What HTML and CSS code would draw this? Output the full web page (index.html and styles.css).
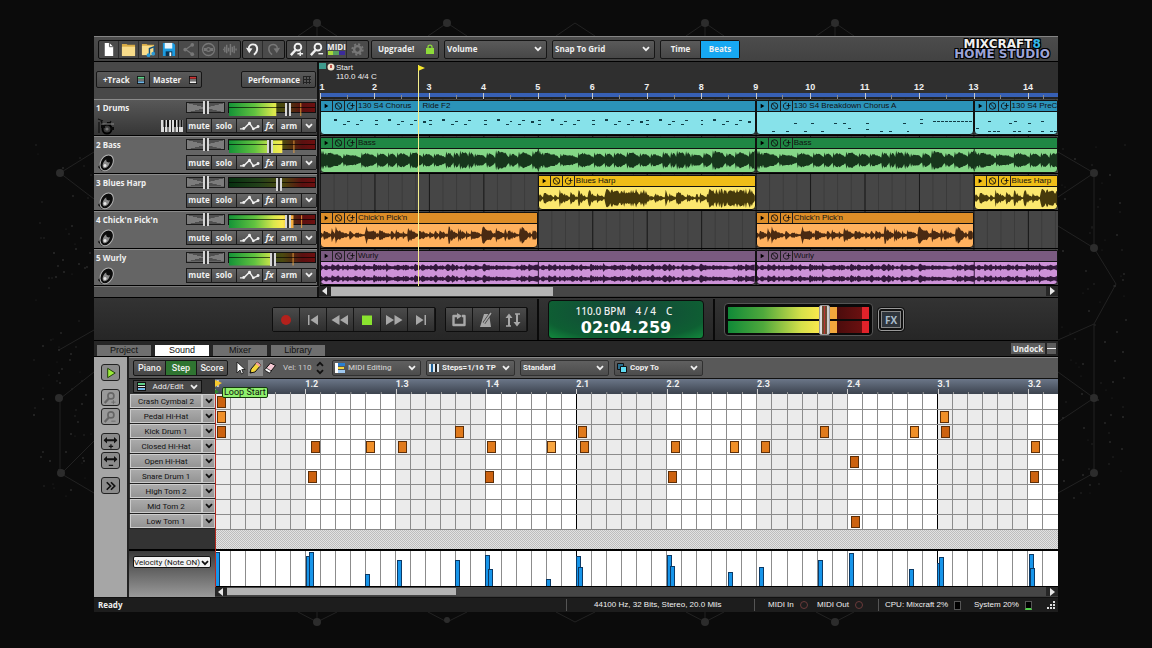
FILE: index.html
```
<!DOCTYPE html>
<html lang="en">
  <head>
    <meta charset="UTF-8" />
    <meta name="viewport" content="width=device-width, initial-scale=1.0" />
    <title>Mixcraft 8 Home Studio</title>
    <link rel="stylesheet" href="styles.css">
  </head>
  <body>
    <svg class="defs" width="0" height="0" aria-hidden="true">
      <symbol id="chevron" viewBox="0 0 8 6"><path d="M1 1.2l3 3 3-3" fill="none" stroke="currentColor" stroke-width="1.8"/></symbol>
      <symbol id="tri-left" viewBox="0 0 8 8"><path d="M6 0v8L1 4z" fill="currentColor"/></symbol>
      <symbol id="tri-right" viewBox="0 0 8 8"><path d="M2 0v8l5-4z" fill="currentColor"/></symbol>
      <symbol id="list" viewBox="0 0 9 9"><path d="M0 0h9v9H0z" fill="#111"/><path d="M1 1h7v2H1z" fill="var(--a, #5fd08a)"/><path d="M1 4h7v1H1z" fill="#eee"/><path d="M1 6h7v2H1z" fill="var(--b, #6fb7e8)"/></symbol>
      <symbol id="no" viewBox="0 0 10 10"><circle cx="5" cy="5" r="3.6" fill="none" stroke="currentColor"/><path d="M2.5 2.5l5 5" stroke="currentColor"/></symbol>
      <symbol id="loop" viewBox="0 0 10 10"><path d="M5 1.5a3.5 3.5 0 1 0 3 5.3M5 4.5h4.6M7.2 1.8v5" fill="none" stroke="currentColor"/></symbol>
      <symbol id="speaker" viewBox="0 0 18 18"><path d="M1 13l4 4 4-1-5-7z" fill="#0c0c0c"/><ellipse cx="9.500" cy="8.500" rx="6" ry="8.400" transform="rotate(30 9 9)" fill="#0c0c0c" stroke="#b5b5b5" stroke-width="1"/><ellipse cx="9.500" cy="9.500" rx="3" ry="5" transform="rotate(30 9 9)" fill="#8a8a8a"/><circle cx="11.500" cy="6" r="2.400" fill="#0c0c0c"/><circle cx="8" cy="11.500" r="1.500" fill="#e8e8e8"/></symbol>
      <symbol id="kit" viewBox="0 0 18 18"><path d="M1 2l5 2M2 5v11M4 4l2 4M14 4l-2 3" stroke="#111" stroke-width="1.300"/><circle cx="10" cy="12" r="4.500" fill="#3a3a3a" stroke="#000" stroke-width="2"/><circle cx="10" cy="12" r="1.600" fill="#777"/><path d="M4 8h4v3H4zM10 5h4v3h-4zM14 10h3v3h-3z" fill="#0a0a0a"/><path d="M5 7h12" stroke="#888"/></symbol>
      <symbol id="curve" viewBox="0 0 22 10"><path d="M1 8h4l6-6 4 6 5-2" fill="none" stroke="currentColor" stroke-width="1.500"/><circle cx="5" cy="7.500" r="1.500" fill="currentColor"/><circle cx="11" cy="2" r="1.500" fill="currentColor"/><circle cx="15" cy="8" r="1.500" fill="currentColor"/><circle cx="20" cy="5.500" r="1.500" fill="currentColor"/></symbol>
      <symbol id="keys" viewBox="0 0 22 12"><path d="M0 0h22v12H0z" fill="#ddd"/><path d="M3.500 0v12M7 0v12M10.500 0v12M14 0v12M17.500 0v12" stroke="#222"/><path d="M3.500 0v7M7 0v7M14 0v7M17.500 0v7M20.500 0v7" stroke="#111" stroke-width="2"/></symbol>
      <symbol id="magnifier" viewBox="0 0 16 16"><circle cx="9.500" cy="5.500" r="3.600" fill="none" stroke="currentColor" stroke-width="2"/><path d="M7 8.500L2 14" stroke="currentColor" stroke-width="2.600"/></symbol>
      <symbol id="arrows" viewBox="0 0 16 8"><path d="M0 4l4-3.600v2.400h8V.4L16 4l-4 3.600V5.200H4v2.400z" fill="currentColor"/></symbol>
    </svg>

    <svg class="backdrop" viewBox="0 0 1152 648" preserveAspectRatio="xMidYMid slice" aria-hidden="true">
      <g fill="none" stroke="#222">
        <path d="M298 36l19-13 20 13M317 23v13M428 36l19-13 20 13M556 36l19-13 20 13M686 36l19-13 19 13M705 23v13M816 36l19-13 19 13M835 23v13"/>
        <path d="M298 612l19 10 20-10M428 612l19 10 20-10M556 612l19 10 20-10M686 612l19 10 19-10M816 612l19 10 19-10M317 612v10M705 612v10"/>
        <path d="M94 152l-34 21M60 173l34 26M94 330l-35 20M61 398l33-26M60 398v75l34 20M62 473l32-32"/>
        <path d="M1058 152l36 21v75M1094 173l-36 24M1094 248l22 36-22 40v74M1094 398v75M1058 372l36 26-36 24M1094 473l-36 20M1058 340l36-16M1094 248l-36-22"/>
      </g>
      <g fill="#2c2c2c">
        <circle cx="317" cy="23" r="4"/><circle cx="447" cy="23" r="4"/><circle cx="705" cy="23" r="4"/><circle cx="835" cy="23" r="4"/>
        <circle cx="317" cy="622" r="4"/><circle cx="447" cy="620" r="3"/><circle cx="705" cy="622" r="4"/><circle cx="835" cy="622" r="4"/>
        <circle cx="60" cy="173" r="4"/><circle cx="59" cy="398" r="4"/><circle cx="61" cy="473" r="4"/>
        <circle cx="1094" cy="173" r="4"/><circle cx="1094" cy="248" r="4"/><circle cx="1094" cy="398" r="4"/><circle cx="1094" cy="473" r="4"/>
      </g>
      <g id="specks" fill="#2a2a2a"></g>
    </svg>

    <main class="app">
      <header class="toolbar">
        <div class="icon-group">
          <button aria-label="New"><svg viewBox="0 0 16 16"><path d="M4 1h5l4 4v10H4z" fill="#fff"/><path d="M9 1v4h4" fill="none" stroke="#555"/></svg></button>
          <button aria-label="Open"><svg viewBox="0 0 16 16"><path d="M1 2h5l1 1h8v11H1z" fill="#d8ab45"/><path d="M1 5h14v10H1z" fill="#f8dc8a"/></svg></button>
          <button aria-label="Add sound"><svg viewBox="0 0 16 16"><path d="M1 2h5l1 1h7v10H1z" fill="#d8ab45"/><path d="M1 4h13v10H1z" fill="#f8dc8a"/><path d="M9 14V7l5-2v7" fill="none" stroke="#124e7a" stroke-width="1.500"/><circle cx="8" cy="14" r="2" fill="#2a9bd8"/><circle cx="13" cy="12.500" r="2" fill="#2a9bd8"/></svg></button>
          <button aria-label="Save"><svg viewBox="0 0 16 16"><path d="M2 1h11l2 2v12H2z" fill="#1c9be0"/><path d="M4 1h8v6H4z" fill="#e8f4fb"/><path d="M5 10h7v5H5z" fill="#0b3350"/><path d="M9 11h2v4H9z" fill="#fff"/></svg></button>
          <button aria-label="Share" disabled><svg viewBox="0 0 16 16"><path d="M12 3L5 8l7 5" fill="none" stroke="currentColor" stroke-width="1.300"/><circle cx="12" cy="3" r="2" fill="currentColor"/><circle cx="4.500" cy="8" r="2" fill="currentColor"/><circle cx="12" cy="13" r="2" fill="currentColor"/></svg></button>
          <button aria-label="Burn disc" disabled><svg viewBox="0 0 16 16"><circle cx="8" cy="8" r="6.400" fill="none" stroke="currentColor" stroke-width="1.400"/><circle cx="8" cy="8" r="2" fill="none" stroke="currentColor" stroke-width="1.400"/><path d="M3 8h3M10 8h3" stroke="currentColor" stroke-width="3"/></svg></button>
          <button aria-label="Mix down" disabled><svg viewBox="0 0 16 16"><path d="M1 8h1M3 5v6M5 3v9M7 6v4M9 2v12M11 5v6M13 4v8M15 7v2" stroke="currentColor" stroke-width="1.500"/></svg></button>
        </div>
        <div class="icon-group">
          <button aria-label="Undo"><svg viewBox="0 0 16 16"><path d="M4 7C4 1 13 1 13 7.500c0 3-1.500 4.500-3.500 6" fill="none" stroke="currentColor" stroke-width="2"/><path d="M1 6l3.500 6L8 7z" fill="currentColor"/></svg></button>
          <button aria-label="Redo" disabled><svg viewBox="0 0 16 16"><path d="M12 7C12 1 3 1 3 7.500c0 3 1.500 4.500 3.500 6" fill="none" stroke="currentColor" stroke-width="1.600"/><path d="M15 6l-3.500 6L8 7z" fill="currentColor"/></svg></button>
        </div>
        <div class="icon-group">
          <button aria-label="Zoom in"><svg viewBox="0 0 16 16"><use href="#magnifier"/><path d="M9 12.500h6M12 10v5" stroke="currentColor" stroke-width="1.500"/></svg></button>
          <button aria-label="Zoom out"><svg viewBox="0 0 16 16"><use href="#magnifier"/><path d="M10 12.500h5" stroke="currentColor" stroke-width="1.500"/></svg></button>
          <button class="midi" aria-label="MIDI"><span>MIDI</span><i></i></button>
          <button aria-label="Preferences" disabled><svg viewBox="0 0 16 16"><circle cx="8" cy="8" r="3.600" fill="none" stroke="currentColor" stroke-width="2.600"/><circle cx="8" cy="8" r="5.600" fill="none" stroke="currentColor" stroke-width="2" stroke-dasharray="2.200 2.200"/></svg></button>
        </div>
        <button class="btn upgrade">Upgrade!
          <svg width="8" height="10" viewBox="0 0 8 10"><path d="M2 5V3c0-2.500 4-2.500 4 0v2" fill="none" stroke="#8edb3a" stroke-width="1.300"/><path d="M0 4h8v6H0z" fill="#8edb3a"/></svg>
        </button>
        <label class="select wide"><select aria-label="Automation"><option>Volume</option></select><svg><use href="#chevron"/></svg></label>
        <label class="select wide"><select aria-label="Snap"><option>Snap To Grid</option></select><svg><use href="#chevron"/></svg></label>
        <div class="toggle">
          <button>Time</button><button class="on">Beats</button>
        </div>
        <div class="logo"><b>MIXCRAFT<em>8</em></b><strong>HOME STUDIO</strong></div>
      </header>

      <section class="arrange">
        <div class="track-head">
          <div class="pair">
            <button>+Track <svg width="8" height="8"><use href="#list"/></svg></button><button>Master <svg class="red" width="8" height="8"><use href="#list"/></svg></button>
          </div>
          <button class="btn perf">Performance <i></i></button>
        </div>
        <div class="ruler" id="ruler">
          <p class="start"><svg width="16" height="8" viewBox="0 0 16 8"><path d="M0 0h7v6H0z" fill="#3f9a8c"/><circle cx="12" cy="4" r="3.500" fill="#f2e4cf"/><path d="M12 2v3" stroke="#a22" stroke-width="1.500"/></svg>Start</p>
          <p class="tempo">110.0 4/4 C</p>
          <div class="bars" id="bars"></div>
        </div>
        <div class="tracks" id="tracks"></div>
        <div class="lanes" id="lanes"></div>
        <div class="track-foot"></div>
        <div class="scrollbar arrange-scroll">
          <button aria-label="Scroll left"><svg width="8" height="8"><use href="#tri-left"/></svg></button>
          <div><i></i></div>
          <button aria-label="Scroll right"><svg width="8" height="8"><use href="#tri-right"/></svg></button>
        </div>
        <div class="playhead"></div>
      </section>

      <section class="transport">
        <div class="keys">
          <button aria-label="Record"><svg viewBox="0 0 20 16"><circle cx="10" cy="8" r="5" fill="#b3211c"/></svg></button>
          <button aria-label="To start"><svg viewBox="0 0 20 16"><path d="M5 3h1.500v10H5zM15 3v10L7.500 8z" fill="currentColor"/></svg></button>
          <button aria-label="Rewind"><svg viewBox="0 0 20 16"><path d="M9.500 3v10L1.500 8zM18 3v10l-8-5z" fill="currentColor"/></svg></button>
          <button aria-label="Stop"><svg viewBox="0 0 20 16"><path d="M5 3.500h10v9.500H5z" fill="#8ae32f"/></svg></button>
          <button aria-label="Fast forward"><svg viewBox="0 0 20 16"><path d="M2 3v10l8-5zM10.500 3v10l8-5z" fill="currentColor"/></svg></button>
          <button aria-label="To end"><svg viewBox="0 0 20 16"><path d="M5 3v10l7.500-5zM13.500 3H15v10h-1.500z" fill="currentColor"/></svg></button>
        </div>
        <div class="keys">
          <button aria-label="Loop"><svg viewBox="0 0 20 16"><path d="M8 4H4.500v9h11V4H13" fill="none" stroke="currentColor" stroke-width="2.400" stroke-linejoin="round"/><path d="M8 1l5 3-5 3.200z" fill="currentColor"/></svg></button>
          <button aria-label="Metronome"><svg viewBox="0 0 20 16"><path d="M4 15L8 2h5l2 13z" fill="currentColor"/><path d="M8 11l7-10" stroke="#333" stroke-width="3"/><path d="M8 11l7-10" stroke="currentColor" stroke-width="1.600"/></svg></button>
          <button aria-label="Punch"><svg viewBox="0 0 20 16"><path d="M6 14V4M14 2v9" stroke="currentColor" stroke-width="2"/><path d="M2.500 6L6 1.500 9.500 6zM10.500 10l3.500 4.500 3.500-4.500z" fill="currentColor"/><path d="M3 14h5M12 2h5" fill="none" stroke="currentColor" stroke-width="1.500"/></svg></button>
        </div>
        <hr>
        <div class="lcd">
          <p><span>110.0 BPM</span><span>4 / 4</span><span>C</span></p>
          <output>02:04.259</output>
        </div>
        <hr>
        <div class="master-meter">
          <i></i><i></i>
          <input type="range" aria-label="Master volume" value="70">
        </div>
        <button class="fx">FX</button>
      </section>

      <nav class="tabs">
        <button>Project</button><button class="on">Sound</button><button>Mixer</button><button>Library</button>
        <button class="undock">Undock</button><button class="shrink" aria-label="Minimise"></button>
      </nav>

      <section class="editor">
        <aside class="side">
          <button aria-label="Play"><svg viewBox="0 0 16 14"><path d="M5 2v10l8-5z" fill="#9bea3a" stroke="#1a3a08"/></svg></button>
          <button class="gap" aria-label="Zoom in" disabled><svg viewBox="0 0 18 16"><use href="#magnifier" width="16" height="16"/><path d="M10 13h5M12.500 10.500v5" stroke="currentColor"/></svg></button>
          <button aria-label="Zoom out" disabled><svg viewBox="0 0 18 16"><use href="#magnifier" width="16" height="16"/><path d="M10 13h5" stroke="currentColor"/></svg></button>
          <button class="gap" aria-label="Taller"><svg viewBox="0 0 16 16"><use href="#arrows" y="2" width="16" height="8"/><path d="M6 13h5M8.500 10.500v5" stroke="currentColor" stroke-width="1.400"/></svg></button>
          <button aria-label="Shorter"><svg viewBox="0 0 16 16"><use href="#arrows" y="2" width="16" height="8"/><path d="M6 13h5" stroke="currentColor" stroke-width="1.400"/></svg></button>
          <button class="gap" aria-label="More"><svg viewBox="0 0 16 14"><path d="M4 3l4 4-4 4M8.500 3l4 4-4 4" fill="none" stroke="currentColor" stroke-width="1.800"/></svg></button>
        </aside>
        <div class="editor-bar">
          <div class="toggle green">
            <button>Piano</button><button class="on">Step</button><button>Score</button>
          </div>
          <div class="tools">
            <button aria-label="Select"><svg viewBox="0 0 14 14"><path d="M4 1v11l3-3 1.500 4 1.800-.8L8.800 8.500h3.400z" fill="#fff" stroke="#111" stroke-width=".8"/></svg></button>
            <button class="on" aria-label="Draw"><svg viewBox="0 0 14 14"><path d="M2 12l1-4 6-7 4 3-6 7z" fill="#f4d63c" stroke="#111"/><path d="M9 1l4 3-1.500 1.800-4-3z" fill="#f3a0a0"/><path d="M2 12l2-.6-1.300-1.200z" fill="#111"/></svg></button>
            <button aria-label="Erase"><svg viewBox="0 0 14 14"><path d="M1.500 9l6-7 5 2.500-6 7.500z" fill="#f6c9d4" stroke="#111"/><path d="M1.500 9l5 3 1.700-2-5-3z" fill="#fff" stroke="#111" stroke-width=".7"/></svg></button>
          </div>
          <label class="vel">Vel: <input type="text" value="110"></label>
          <div class="stepper"><button aria-label="Up"><svg class="flip" width="8" height="6"><use href="#chevron"/></svg></button><button aria-label="Down"><svg width="8" height="6"><use href="#chevron"/></svg></button></div>
          <label class="select iconic dim"><svg class="lead" viewBox="0 0 10 10"><path d="M0 0h3v10H0z" fill="#fff"/><path d="M3 0h7v3H3z" fill="#2a7fd0"/><path d="M3 4h6v2H3z" fill="#f4d63c"/><path d="M3 7h7v3H3z" fill="#9fc8f0"/></svg><select aria-label="Mode"><option>MIDI Editing</option></select><svg><use href="#chevron"/></svg></label>
          <label class="select iconic"><svg class="lead" viewBox="0 0 10 10"><path d="M0 1h10v8H0z" fill="#dfe8ee"/><path d="M2 1h2v8H2z" fill="#1d5f96"/><path d="M6 1h2v8H6z" fill="#222"/></svg><select aria-label="Steps"><option>Steps=1/16 TP</option></select><svg><use href="#chevron"/></svg></label>
          <label class="select"><select aria-label="Style"><option>Standard</option></select><svg><use href="#chevron"/></svg></label>
          <label class="select iconic"><svg class="lead" viewBox="0 0 10 10"><path d="M.5.500h6v6h-6z" fill="#2a6f90" stroke="#111"/><path d="M3.500 3.500h6v6h-6z" fill="#5fdcf2" stroke="#111"/></svg><select aria-label="Copy"><option>Copy To</option></select><svg><use href="#chevron"/></svg></label>
        </div>
        <div class="names" id="names">
          <div class="add"><button class="addedit"><svg width="9" height="9"><use href="#list"/></svg><span>Add/Edit</span><svg width="8" height="6"><use href="#chevron"/></svg></button></div>
        </div>
        <div class="steps">
          <div class="beats" id="beats"></div>
          <svg class="grid" id="grid"></svg>
          <div class="hatch"></div>
          <svg class="velocity" id="velocity"></svg>
          <div class="scrollbar">
            <button aria-label="Scroll left"><svg width="8" height="8"><use href="#tri-left"/></svg></button>
            <div><i></i></div>
            <button aria-label="Scroll right"><svg width="8" height="8"><use href="#tri-right"/></svg></button>
          </div>
          <span class="loop-start">Loop Start</span>
          <svg class="loop-flag" width="8" height="16" viewBox="0 0 8 16"><path d="M0 1l7 3-7 4z" fill="#f7c92c"/><path d="M0 10l4 3-4 2z" fill="#2f8a2a"/></svg>
        </div>
      </section>

      <footer class="status">
        <span class="ready">Ready</span>
        <span class="audio">44100 Hz, 32 Bits, Stereo, 20.0 Mils</span>
        <span class="midi-io">MIDI In <i></i></span><span class="midi-out">MIDI Out <i></i></span>
        <span class="cpu">CPU: Mixcraft 2% <i></i></span><span class="sys">System 20% <i></i></span>
        <svg width="8" height="8" viewBox="0 0 8 8"><path d="M6 0h2v2H6zM3 3h2v2H3zM6 3h2v2H6zM0 6h2v2H0zM3 6h2v2H3zM6 6h2v2H6z" fill="#ddd"/></svg>
      </footer>
    </main>
    <script src="script.js"></script>
  </body>
</html>
```
FILE: styles.css
```
* {
  box-sizing: border-box;
}

body {
  margin: 0;
  padding: 36px 94px;
  min-height: 100vh;
  background: #0b0b0b;
  color: #f0f0f0;
  font-family: "Open Sans", "Noto Sans", sans-serif;
  font-size: 8px;
  line-height: 12px;
}

p {
  margin: 0;
}

button,
input,
select {
  margin: 0;
  padding: 0;
  border: 0;
  background: none;
  color: inherit;
  font: inherit;
}

.defs {
  display: none;
}

.backdrop {
  position: absolute;
  inset: 0;
  width: 100%;
  height: 100%;
  z-index: -1;
}

.app {
  background: #222;
  font-weight: 700;
}

/* top toolbar */
.toolbar {
  display: flex;
  align-items: center;
  gap: 5px;
  height: 26px;
  padding: 0 8px 0 4px;
  border-top: 1px solid #858585;
  border-bottom: 1px solid #000;
  background: linear-gradient(#4c4c4c, #424242);
}

.icon-group {
  display: flex;
  height: 19px;
  margin-right: -4px;
  border: 1px solid #111;
  border-radius: 2px;
  background: #4a4a4a;
}

.icon-group button {
  width: 20px;
  border-right: 1px solid #2c2c2c;
  display: flex;
  align-items: center;
  justify-content: center;
}

.icon-group button:last-child {
  width: 21px;
  border-right: 0;
}

.icon-group svg {
  width: 15px;
  height: 15px;
}

.icon-group button:disabled {
  color: #777;
}

.icon-group .midi {
  flex-direction: column;
  line-height: 8px;
}

.midi i {
  width: 17px;
  height: 4px;
  background: linear-gradient(90deg, #a6d83a 30%, #57a05f 30% 65%, #3b2b9a 65%);
}

.btn,
.pair,
.toggle,
.select {
  border: 1px solid #161616;
  border-radius: 2px;
  background: linear-gradient(#5a5a5a, #474747);
}

.upgrade {
  display: flex;
  align-items: center;
  justify-content: space-between;
  width: 68px;
  height: 19px;
  margin-left: 1px;
  padding: 0 4px 0 6px;
}

.select {
  display: grid;
  grid-template-columns: 1fr 8px;
  align-items: center;
  height: 16px;
  padding: 0 4px 0 2px;
}

.select select {
  grid-area: 1 / 1 / 2 / 3;
  appearance: none;
  width: 100%;
  outline: 0;
}

.select svg {
  grid-area: 1 / 2;
  width: 8px;
  height: 6px;
  pointer-events: none;
}

.select.wide {
  width: 103px;
  height: 19px;
}

.toggle {
  display: flex;
}

.toggle button + button {
  border-left: 1px solid #161616;
}

.toolbar .toggle button {
  width: 39px;
  height: 17px;
}

.toolbar .toggle .on {
  background: #17a8f2;
}

.logo {
  margin-left: auto;
  font-family: "DejaVu Sans", sans-serif;
  font-size: 12px;
  line-height: 10px;
  text-align: center;
  text-shadow: 1px 1px #000, -1px -1px #000, 1px -1px #000, -1px 1px #000;
}

.logo b,
.logo strong {
  display: block;
}

.logo em {
  color: #35b8e8;
  font-style: normal;
}

.logo strong {
  color: #9ca3d6;
}

/* arrangement */
.arrange {
  position: relative;
  display: grid;
  grid-template-columns: 225px 1fr;
  grid-template-rows: 37px 187px 11px;
  border-bottom: 1px solid #000;
}

.track-head {
  display: flex;
  align-items: center;
  justify-content: space-between;
  padding: 0 1px 2px 2px;
  border-right: 2px solid #111;
  background: #484848;
}

.track-head button {
  display: flex;
  align-items: center;
  justify-content: space-between;
  height: 15px;
  padding: 0 4px 0 6px;
}

.pair {
  display: flex;
}

.pair button {
  width: 52px;
}

.pair button + button {
  border-left: 1px solid #161616;
  padding-left: 3px;
}

.red {
  --a: #c33;
  --b: #eee;
}

.track-head .perf {
  width: 75px;
  height: 17px;
}

.perf i {
  width: 8px;
  height: 8px;
  background: repeating-linear-gradient(90deg, #222 0 1px, transparent 1px 3px), repeating-linear-gradient(#222 0 1px, #555 1px 3px);
}

.ruler {
  position: relative;
  overflow: hidden;
  background: #2f2f2f;
  font-family: "Liberation Sans", sans-serif;
  line-height: 9px;
  font-weight: 400;
}

.start {
  display: flex;
  gap: 1px;
  padding-top: 1px;
}

.tempo {
  padding-left: 17px;
}

.bars {
  display: grid;
  grid-template-columns: repeat(13, 100fr) 55fr;
  height: 18px;
  margin-left: 1px;
  padding-top: 2px;
  background: linear-gradient(transparent 12px, #3760b5 12px 16px, #222 16px);
  font-size: 9px;
  font-weight: 700;
}

.bars div {
  height: 16px;
  background: linear-gradient(#c8c8c8, #c8c8c8) 0 10px / 1px 6px no-repeat, linear-gradient(#888, #888) 50% 12px / 1px 4px no-repeat;
}

.bars span {
  display: block;
  width: 14px;
  margin-left: -7px;
  text-align: center;
}

.bars div:first-child span {
  margin-left: -5px;
}

.tracks {
  display: grid;
  grid-template-rows: repeat(5, 1fr);
  border-right: 2px solid #111;
}

.track {
  display: grid;
  grid-template-columns: 1fr 39px 88px;
  grid-template-rows: 12px 16px;
  gap: 4px 3px;
  padding: 2px 1px 0 2px;
  border-top: 1px solid #8a8a8a;
  border-bottom: 1px solid #000;
  background: #656565;
  line-height: 12px;
}

.track.selected {
  background: linear-gradient(#585858, #363636);
}

.track h2 {
  margin: 0;
  font-size: 8px;
  font-weight: 700;
}

.track .who {
  display: flex;
  justify-content: space-between;
  align-items: center;
}

.pan {
  appearance: none;
  width: 39px;
  height: 11px;
  border: 1px solid #1c1c1c;
  background:
    linear-gradient(to top right, transparent 48%, #505050 50%) 0 0 / 50% 50% no-repeat,
    linear-gradient(to bottom right, transparent 48%, #505050 50%) 0 100% / 50% 50% no-repeat,
    linear-gradient(to top left, transparent 48%, #505050 50%) 100% 0 / 50% 50% no-repeat,
    linear-gradient(to bottom left, transparent 48%, #505050 50%) 100% 100% / 50% 50% no-repeat,
    #7c7c7c;
}

.pan::-webkit-slider-thumb,
.meter input::-webkit-slider-thumb {
  appearance: none;
  width: 6px;
  height: 13px;
  border: solid #d6d6d6;
  border-width: 0 2px;
  background: #333;
}

.meter {
  display: grid;
  height: 11px;
  border: 1px solid #111;
  background: linear-gradient(90deg, #06300f, #23401a 35%, #4b4a10 62%, #5b1010 85%, #6d0f0f);
}

.meter i,
.meter input,
.meter u {
  grid-area: 1 / 1;
}

.meter i {
  background: linear-gradient(90deg, #149337, #62c340 30%, #d9e84c 52%, #fcea50 62%, #f3a53c 75%);
}

.meter u {
  z-index: 1;
  background: linear-gradient(transparent 4px, rgba(0, 0, 0, 0.65) 4px 5px, transparent 5px);
}

.meter input {
  z-index: 2;
  appearance: none;
  width: 100%;
  background: none;
}

.strip {
  grid-column: 2 / 4;
  display: grid;
  grid-template-columns: 25px 25px 26px 14px 25px 15px;
  border: 1px solid #1a1a1a;
  border-right-width: 0;
  height: 15px;
}

.strip button {
  display: flex;
  align-items: center;
  justify-content: center;
  border-right: 1px solid #1a1a1a;
  background: linear-gradient(#666, #4c4c4c);
}

.strip em {
  font-size: 9px;
}

.lanes {
  display: grid;
  grid-template-rows: repeat(5, 1fr);
  padding-left: 1px;
  background: #333;
  overflow: hidden;
  color: #111;
  font-family: "Liberation Sans", sans-serif;
  font-weight: 400;
}

.lane {
  display: grid;
  grid-template-columns: repeat(3, 400fr) 155fr;
  padding-top: 1px;
  border-bottom: 1px solid #000;
  background: #464646;
  background-image: linear-gradient(90deg, #181818 1px, transparent 1px), linear-gradient(90deg, #3a3a3a 1px, transparent 1px);
  background-size: calc(100% / 13.55) 100%, calc(100% / 54.2) 100%;
  min-height: 0;
  min-width: 0;
}

.clip {
  display: flex;
  flex-direction: column;
  min-width: 0;
  min-height: 0;
  border: 1px solid #111;
  border-radius: 0 0 4px 4px;
  background: var(--body);
  overflow: hidden;
}

.clip header {
  display: flex;
  align-items: center;
  flex: none;
  height: 11px;
  border-bottom: 1px solid #111;
  background: var(--bar);
  line-height: 10px;
  white-space: nowrap;
}

.clip header svg {
  flex: none;
  width: 12px;
  height: 10px;
  padding: 0 1px;
  border-right: 1px solid #222;
}

.clip header span {
  margin-left: 1px;
}

.clip header span + span {
  margin-left: 11px;
}

.clip .wave {
  flex: 1;
  min-height: 0;
  width: 100%;
  fill: var(--ink);
}

.track-foot {
  border-top: 1px solid #777;
  border-right: 2px solid #111;
  background: #525252;
}

.scrollbar {
  display: flex;
  height: 11px;
  padding-bottom: 1px;
  background: #3c3c3c;
  color: #e6e6e6;
}

.scrollbar button {
  display: flex;
  align-items: center;
  justify-content: center;
  width: 12px;
  background: #262626;
}

.scrollbar div {
  flex: 1;
  padding: 1px 0;
  background: #464646;
}

.scrollbar i {
  display: block;
  width: 28%;
  height: 100%;
  background: #b4b4b4;
}

.arrange-scroll i {
  width: 31%;
}

.arrange-scroll div {
  padding: 1px 0 0;
}

/* song position marker, lies over ruler and lanes */
.playhead {
  position: absolute;
  top: 3px;
  bottom: 11px;
  left: calc(225px + (100% - 225px) * 0.134);
  width: 1px;
  background: #f5ee8c;
}

.playhead::before {
  content: "";
  position: absolute;
  border: solid transparent;
  border-width: 3px 0 3px 7px;
  border-left-color: #f7e82f;
}

/* transport */
.transport {
  display: flex;
  align-items: center;
  justify-content: center;
  gap: 9px;
  height: 43px;
  padding: 1px 0 0 24px;
  background: linear-gradient(#333, #262626);
  border-bottom: 1px solid #000;
}

.transport hr {
  align-self: stretch;
  width: 2px;
  margin: 0;
  border: 0;
  background: #0a0a0a;
}

.keys {
  display: flex;
  border: 1px solid #0e0e0e;
  border-radius: 2px;
}

.keys button {
  width: 27px;
  height: 23px;
  border-right: 1px solid #161616;
  background: linear-gradient(#4b4b4b, #2e2e2e);
  color: #a8a8a8;
}

.keys svg {
  display: block;
  width: 20px;
  height: 16px;
  margin: auto;
}

.lcd {
  width: 156px;
  height: 39px;
  padding: 4px 0 0;
  border: 1px solid #0c0c0c;
  border-radius: 4px;
  background: radial-gradient(ellipse at 50% 30%, #15443a, #0e5f33 75%, #128a3d);
  text-align: center;
}

.lcd p {
  display: flex;
  justify-content: center;
  gap: 10px;
  padding-right: 4px;
  font-family: "Noto Sans", sans-serif;
  font-size: 10px;
  font-weight: 500;
}

.lcd output {
  display: block;
  font-family: "DejaVu Sans", sans-serif;
  font-size: 16px;
  line-height: 21px;
  color: #fff;
}

.master-meter {
  display: grid;
  grid-template-rows: 12px 12px;
  gap: 2px;
  align-content: center;
  width: 149px;
  height: 33px;
  padding: 0 3px;
  border: 1px solid #555;
  border-radius: 4px;
  background: #0a0a0a;
}

.master-meter i {
  grid-area: 1 / 1;
  background: linear-gradient(90deg, #108a38, #4fa83c 25%, #d6e04a 52%, #fbe84c 65%, #f2a83c 70% 77%, #4a0c0c 77%, #6a1010 95%, #e0222a 95%);
}

.master-meter i + i {
  grid-row: 2;
}

.master-meter input {
  grid-area: 1 / 1 / 3 / 2;
  z-index: 1;
  appearance: none;
  width: 100%;
  background: none;
}

.master-meter input::-webkit-slider-thumb {
  appearance: none;
  width: 11px;
  height: 30px;
  border: 1px solid #999;
  border-radius: 2px;
  background: linear-gradient(90deg, #ddd 2px, #6a4a30 2px 4px, #b33 4px 5px, #6a4a30 5px 7px, #ccc 7px);
}

.fx {
  width: 26px;
  height: 23px;
  margin-left: -4px;
  border: 1px solid #999;
  border-radius: 3px;
  outline: 1px solid #111;
  background: #2e343b;
  box-shadow: inset 0 0 0 2px #111, inset 0 0 0 3px #888;
  color: #a9bccb;
  font-size: 10px;
}

/* panel tabs */
.tabs {
  display: flex;
  align-items: flex-end;
  gap: 4px;
  height: 16px;
  padding: 0 2px 0 3px;
  background: #262626;
  border-bottom: 1px solid #000;
  font-family: "Liberation Sans", sans-serif;
  font-size: 9px;
  font-weight: 400;
}

.tabs button {
  width: 54px;
  height: 11px;
  line-height: 11px;
  background: #6f6f6f;
  color: #111;
}

.tabs .on {
  background: #fff;
}

.tabs .undock {
  width: 34px;
  margin: 0 -2px 2px auto;
  background: #5c5c5c;
  color: #f0f0f0;
  font-family: "Open Sans", sans-serif;
  font-size: 8px;
  font-weight: 700;
}

.tabs .shrink {
  width: 9px;
  margin-bottom: 2px;
  background: linear-gradient(#5c5c5c 5px, #eee 5px 6px, #5c5c5c 6px);
}

/* step editor */
.editor {
  display: grid;
  grid-template-columns: 35px 86px 1fr;
  grid-template-rows: 22px auto;
}

.side {
  grid-row: 1 / 3;
  display: flex;
  flex-direction: column;
  align-items: center;
  gap: 2px;
  padding-top: 7px;
  border-right: 2px solid #222;
  background: #a6a6a6;
  color: #111;
}

.side button {
  display: flex;
  align-items: center;
  justify-content: center;
  width: 19px;
  height: 17px;
  border: 1px solid #222;
  border-radius: 3px;
  background: #8b8b8b;
}

.side .gap {
  margin-top: 6px;
}

.side button:disabled {
  color: #666;
  background: #999;
}

.side svg {
  width: 15px;
  height: 14px;
}

.editor-bar {
  grid-column: 2 / 4;
  display: flex;
  align-items: center;
  gap: 5px;
  padding: 0 4px;
  border-top: 1px solid #8a8a8a;
  border-bottom: 1px solid #111;
  background: #595959;
  font-family: Roboto, "Liberation Sans", sans-serif;
  font-size: 9px;
  font-weight: 500;
}

.editor-bar .toggle button {
  width: 31px;
  height: 14px;
  line-height: 13px;
}

.toggle.green .on {
  background: #2f7431;
}

.tools {
  display: flex;
}

.tools button {
  width: 15px;
  height: 16px;
}

.tools .on {
  background: #8a8a8a;
}

.tools svg {
  display: block;
  width: 14px;
  height: 14px;
}

.vel {
  display: flex;
  gap: 2px;
  width: 32px;
  font-size: 8px;
  font-weight: 400;
  color: #ccc;
  white-space: nowrap;
}

.vel input {
  width: 16px;
}

.stepper {
  display: grid;
  gap: 2px;
  width: 8px;
  margin: 0 3px 0 -4px;
  color: #111;
}

.stepper button,
.stepper svg {
  display: block;
  height: 6px;
}

.flip {
  transform: rotate(180deg);
}

.editor-bar .select {
  width: 89px;
  background: linear-gradient(#606060, #4c4c4c);
  border-color: #303030;
  font-size: 8px;
  font-weight: 700;
}

.editor-bar .select .lead {
  grid-area: 1 / 1;
  width: 10px;
  height: 10px;
}

.iconic select {
  padding-left: 13px;
}

.editor-bar .dim {
  font-weight: 500;
}

.dim select {
  color: #c4c4c4;
}

.names {
  display: flex;
  flex-direction: column;
  background: #333;
  color: #111;
  font-family: Roboto, "Liberation Sans", sans-serif;
  font-weight: 400;
}

.add {
  height: 15px;
  padding: 1px 13px 0 4px;
}

.addedit {
  display: flex;
  align-items: center;
  justify-content: space-between;
  width: 100%;
  height: 13px;
  padding: 0 3px;
  border: 1px solid #111;
  background: #4a4a4a;
  color: #eee;
}

.name-row {
  display: grid;
  grid-template-columns: 1fr 13px;
  height: 15px;
  padding: 0 0 0 1px;
  border-bottom: 1px solid #222;
}

.name-row button {
  border: 1px solid #ccc;
  background: linear-gradient(#aaa, #949494);
  line-height: 11px;
}

.name-row svg {
  display: block;
  margin: auto;
}

.params {
  flex: 1;
  margin-top: 20px;
  padding: 5px 4px 0;
  border-top: 2px solid #000;
  background: linear-gradient(#3a3a3a, #9a9a9a);
}

.params .select {
  height: 12px;
  padding: 0 1px 0 0;
  border: 1px solid #111;
  background: #f2f2f2;
}

.steps {
  position: relative;
  min-width: 0;
}

.beats {
  display: grid;
  grid-template-columns: repeat(9, 6fr) 2fr;
  height: 15px;
  overflow: hidden;
  background: linear-gradient(#6b7688, #3c434e);
  font-family: Roboto, "Liberation Sans", sans-serif;
  font-size: 9px;
  line-height: 11px;
}

.beats span {
  min-width: 0;
  background: linear-gradient(#ccc, #ccc) 0 10px / 1px 5px no-repeat, linear-gradient(90deg, #999 1px, transparent 1px) 0 13px / calc(100% / 6) 2px repeat-x;
}

.beats span:last-child {
  background-size: 1px 5px, 50% 2px;
}

.grid {
  display: block;
  width: 100%;
  height: 135px;
  background: #fff;
}

.hatch {
  height: 20px;
  background: repeating-conic-gradient(#bdbdbd 0 25%, #e2e2e2 0 50%) 0 0 / 2px 2px;
  border-top: 1px solid #888;
}

.velocity {
  display: block;
  width: 100%;
  height: 38px;
  border-top: 2px solid #000;
  border-bottom: 1px solid #000;
  background: #fff;
}

.steps .scrollbar {
  height: 10px;
}

.steps::before {
  content: "";
  position: absolute;
  top: 15px;
  bottom: 10px;
  left: 0;
  width: 1px;
  background: #b5281e;
}

.loop-start {
  position: absolute;
  top: 8px;
  left: 7px;
  padding: 0 1px;
  border: 1px solid #143a0c;
  border-radius: 2px;
  background: #8ff06c;
  color: #111;
  font-family: Roboto, "Liberation Sans", sans-serif;
  font-size: 9px;
  font-weight: 400;
  line-height: 9px;
}

.loop-flag {
  position: absolute;
  top: 0;
  left: 0;
}

/* status bar */
.status {
  display: flex;
  align-items: center;
  height: 15px;
  padding: 0 3px 0 4px;
  background: #1d1d1d;
  border-top: 1px solid #111;
  font-family: "Liberation Sans", sans-serif;
  font-weight: 400;
  white-space: nowrap;
}

.status span {
  display: flex;
  align-items: center;
  gap: 6px;
}

.status .ready {
  flex: 1;
  font-family: "Open Sans", sans-serif;
  font-weight: 700;
}

.audio {
  width: 188px;
  padding-left: 27px;
  border-left: 1px solid #555;
}

.midi-io {
  width: 63px;
  padding-left: 13px;
  border-left: 1px solid #555;
}

.midi-out {
  width: 61px;
}

.midi-io i,
.midi-out i {
  width: 8px;
  height: 8px;
  border: 1px solid #6a3a3a;
  border-radius: 50%;
}

.cpu {
  width: 96px;
  padding-left: 6px;
  border-left: 1px solid #555;
}

.sys {
  width: 73px;
}

.cpu i,
.sys i {
  width: 7px;
  height: 9px;
  border: 1px solid #555;
  background: #000;
}

.sys i {
  border-bottom: 2px solid #4fd04a;
}
```
FILE: script.js
```
const CELLS = 56;

const tracks = [
  { name: "1 Drums", fill: 55, vol: 70, peak: 83, bar: "#2b93b9", body: "#87e2ea", ink: "#123c46", kind: "midi" },
  { name: "2 Bass", fill: 62, vol: 48, peak: 75, bar: "#1f8744", body: "#84d787", ink: "#17361c", kind: "bass" },
  { name: "3 Blues Harp", fill: 0, vol: 59, peak: 0, bar: "#efbd17", body: "#fbe76e", ink: "#463a0c", kind: "harp" },
  { name: "4 Chick'n Pick'n", fill: 75, vol: 70, peak: 84, bar: "#dd8d27", body: "#ffb15e", ink: "#4a2a12", kind: "pick" },
  { name: "5 Wurly", fill: 50, vol: 51, peak: 74, bar: "#7a5a80", body: "#cd92d8", ink: "#33183c", kind: "wurly" },
];

// clips: [track, first column, last column, titles, loops]
const clips = [
  [0, 1, 3, ["130 S4 Chorus", "Ride F2"], 2],
  [0, 3, 4, ["130 S4 Breakdown Chorus A"], 1],
  [0, 4, 5, ["130 S4 PreC"], 1],
  [1, 1, 3, ["Bass"], 2],
  [1, 3, 5, ["Bass"], 1.3875],
  [2, 2, 3, ["Blues Harp"], 1],
  [2, 4, 5, ["Blues Harp"], 0.3875],
  [3, 1, 2, ["Chick'n Pick'n"], 1],
  [3, 3, 4, ["Chick'n Pick'n"], 1],
  [4, 1, 3, ["Wurly"], 2],
  [4, 3, 5, ["Wurly"], 1.3875],
];

const LOOP = 218;

function random(seed) {
  return () => {
    seed = (seed * 16807) % 2147483647;
    return seed / 2147483647;
  };
}

// one value (0..1) per pixel for a four bar loop
function envelope(kind) {
  const rnd = random({ bass: 7001, harp: 21007, pick: 5003, wurly: 11003 }[kind]);
  const out = [];
  while (out.length < LOOP) {
    const pos = out.length / LOOP;
    let len = 6, amp = 0.5;
    if (kind === "bass") { len = 4 + rnd() * 14; amp = 0.6 + rnd() * 0.38; }
    if (kind === "harp") { len = 3 + rnd() * 8; amp = pos > 0.75 || (pos > 0.3 && pos < 0.46) ? 0.9 : 0.35 + rnd() * 0.5; }
    if (kind === "pick") { len = 2 + rnd() * 12; amp = 0.3 + rnd() * 0.7; }
    if (kind === "wurly") { len = 3 + rnd() * 5; amp = pos > 0.93 ? 0.75 : 0.4 + rnd() * 0.45; }
    for (let i = 0; i < len && out.length < LOOP; i++) {
      const t = i / len;
      let v;
      if (kind === "bass") v = i === 0 ? amp : amp * (1 - Math.pow(t, 3) * 0.7) * (i === 1 ? 0.6 : 0.75 + rnd() * 0.25);
      else if (kind === "harp") v = amp > 0.85 ? 0.35 + rnd() * 0.6 : amp * (1 - t * 0.9) * (0.5 + rnd() * 0.6);
      else if (kind === "pick") v = amp * (1 - t * 0.85) * (0.5 + rnd() * 0.6);
      else v = amp * (1 - t * 0.5) * (0.5 + rnd() * 0.6);
      out.push(Math.max(0.08, v));
    }
  }
  return out;
}

function wave(kind, loops) {
  const env = envelope(kind);
  const n = Math.round(LOOP * loops);
  const channels = kind === "wurly" ? [[25, 24], [75, 24]] : [[50, 47]];
  let svg = "";
  for (const [mid, scale] of channels) {
    const up = [], down = [];
    for (let i = 0; i <= n; i++) {
      const v = env[i % LOOP] * scale;
      up.push(`${i} ${(mid - v).toFixed(1)}`);
      down.unshift(`${i} ${(mid + v).toFixed(1)}`);
    }
    svg += `<path d="M${up.join("L")}L${down.join("L")}z"/>`;
  }
  for (let k = 1; k < loops; k++) svg += `<rect x="${k * LOOP}" width="1" height="100"/>`;
  return `<svg class="wave" viewBox="0 0 ${n} 100" preserveAspectRatio="none">${svg}</svg>`;
}

function midiDots(first) {
  const dots = [];
  let n = LOOP;
  if (first === 1) {
    n = LOOP * 2;
    for (let b = 0; b < 8; b++) {
      const x = b * 54.5;
      if (b) dots.push([x, 35], [x, 52]);
      dots.push([x + 13, 33], [x + 22, 52], [x + 26, 38], [x + 35, 52], [x + 39, 36]);
      if (b % 2) dots.push([x + 48, 42]);
    }
  } else if (first === 3) {
    [37, 55, 78, 87, 147].forEach((x) => dots.push([x, 50]));
    [15, 29, 47, 65, 124, 133, 151].forEach((x) => dots.push([x, 86]));
    dots.push([92, 70], [110, 50], [110, 74], [165, 32], [165, 48]);
    for (let x = 178; x < 216; x += 4) dots.push([x, 38]);
  } else {
    n = 84;
    dots.push([13, 38], [40, 38], [67, 38], [35, 50], [54, 50], [1, 72]);
    [13, 18, 22, 39, 44, 54, 67, 76, 81].forEach((x) => dots.push([x, 86]));
  }
  const rects = dots.map(([x, y]) => `<rect x="${x}" y="${y}" width="3" height="5"/>`).join("");
  return `<svg class="wave" viewBox="0 0 ${n} 100" preserveAspectRatio="none" shape-rendering="crispEdges">${rects}</svg>`;
}

document.getElementById("tracks").innerHTML = tracks.map((t, i) => `
  <div class="track ${i === 0 ? "selected" : ""}">
    <h2>${t.name}</h2>
    <input class="pan" type="range" value="50" aria-label="${t.name} pan">
    <div class="meter">
      <i style="clip-path: inset(0 ${100 - t.fill}% 0 0)"></i>
      ${t.peak ? `<i style="clip-path: inset(0 ${99 - t.peak}% 0 ${t.peak}%)"></i>` : ""}
      <u></u>
      <input type="range" value="${t.vol}" aria-label="${t.name} volume">
    </div>
    <div class="who">
      <svg width="20" height="18"><use href="#${i === 0 ? "kit" : "speaker"}"/></svg>
      ${i === 0 ? `<svg width="22" height="12"><use href="#keys"/></svg>` : ""}
    </div>
    <div class="strip">
      <button>mute</button><button>solo</button>
      <button aria-label="Automation"><svg width="21" height="10"><use href="#curve"/></svg></button>
      <button><em>fx</em></button><button>arm</button>
      <button aria-label="More"><svg width="8" height="6"><use href="#chevron"/></svg></button>
    </div>
  </div>`).join("");

document.getElementById("bars").innerHTML = Array.from({ length: 14 }, (_, i) => `<div><span>${i + 1}</span></div>`).join("");

document.getElementById("lanes").innerHTML = tracks.map((t, i) => {
  const items = clips.filter((c) => c[0] === i).map(([, from, to, titles, loops]) => `
    <article class="clip" style="grid-column: ${from} / ${to}; --bar: ${t.bar}; --body: ${t.body}; --ink: ${t.ink}">
      <header>
        <svg viewBox="0 0 10 10"><path d="M3 2.500v5L7 5z"/></svg>
        <svg><use href="#no"/></svg>
        <svg><use href="#loop"/></svg>
        ${titles.map((x) => `<span>${x}</span>`).join("")}
      </header>
      ${t.kind === "midi" ? midiDots(from) : wave(t.kind, loops)}
    </article>`);
  return `<div class="lane">${items.join("")}</div>`;
}).join("");

document.getElementById("beats").innerHTML = ["1", "1.2", "1.3", "1.4", "2.1", "2.2", "2.3", "2.4", "3.1", "3.2"]
  .map((b) => `<span>${b}</span>`).join("");

const rows = ["Crash Cymbal 2", "Pedal Hi-Hat", "Kick Drum 1", "Closed Hi-Hat", "Open Hi-Hat", "Snare Drum 1", "High Tom 2", "Mid Tom 2", "Low Tom 1"];
document.getElementById("names").insertAdjacentHTML("beforeend", rows.map((r) => `
  <div class="name-row"><button>${r}</button><button aria-label="${r} menu"><svg width="8" height="6"><use href="#chevron"/></svg></button></div>`).join("") + `
  <div class="params"><label class="select"><select aria-label="Parameter"><option>Velocity (Note ON)</option></select><svg><use href="#chevron"/></svg></label></div>`);

// notes: [row, cell, strength]
const notes = [
  [0, 0.16, 0], [1, 0.16, 2], [2, 0.16, 0],
  [1, 48.17, 2], [2, 16, 1], [2, 24.17, 1], [2, 40.2, 1], [2, 46.2, 2], [2, 48.24, 0],
  [3, 6.4, 0], [3, 10.07, 2], [3, 12.17, 1], [3, 18.1, 1], [3, 22.07, 3], [3, 24.27, 1],
  [3, 30.35, 1], [3, 34.25, 2], [3, 36.3, 1], [3, 54.25, 1],
  [4, 42.2, 0], [5, 6.2, 0], [5, 18, 0], [5, 30.15, 0], [5, 54.2, 0], [8, 42.27, 0],
];
const shades = ["#cc6210", "#e07a1c", "#f08f28", "#f7a540"];
const pct = (cell) => `${(cell / CELLS * 100).toFixed(3)}%`;

function columns(height) {
  let s = "";
  for (let c = 1; c < CELLS; c++) {
    s += `<line x1="${pct(c)}" x2="${pct(c)}" y1="0" y2="${height}" stroke="${c % 24 === 0 ? "#000" : "#8c8c8c"}"/>`;
  }
  return s;
}

let grid = "";
for (let c = 0; c < CELLS; c += 12) {
  grid += `<rect x="${pct(c)}" width="${pct(6)}" height="135" fill="#ebebeb"/>`;
}
grid += columns(135);
for (let r = 1; r <= 9; r++) {
  grid += `<line x1="0" x2="100%" y1="${r * 15}" y2="${r * 15}" stroke="#8c8c8c"/>`;
}
grid += notes.map(([r, c, s]) => `<rect x="${pct(c)}" y="${r * 15 + 2}" width="8" height="11" fill="${shades[s]}" stroke="#5e2f08"/>`).join("");
const gridSvg = document.getElementById("grid");
gridSvg.setAttribute("shape-rendering", "crispEdges");
gridSvg.innerHTML = grid;

// velocities: [cell, height]
const velocities = [
  [0, 34], [6.05, 30], [6.3, 34], [10, 12], [12.1, 26], [15.95, 26], [17.95, 31], [18.15, 17], [22, 7],
  [24, 30], [24.17, 19], [30.05, 31], [30.25, 20], [34.1, 14], [36.15, 19], [40.1, 26], [42.15, 33],
  [46.15, 17], [48, 23], [48.12, 29], [54.1, 32], [54.2, 18],
];
const vel = document.getElementById("velocity");
vel.setAttribute("shape-rendering", "crispEdges");
vel.innerHTML = columns(35) + velocities.map(([c, h]) =>
  `<rect x="${pct(c)}" y="${35 - h}" width="4" height="${h}" fill="#1795ea" stroke="#0b3a66"/>`).join("");

// dust in the backdrop
const rnd = random(3001);
let dust = "";
for (let i = 0; i < 160; i++) {
  const side = i % 2 ? 1062 + rnd() * 64 : 34 + rnd() * 58;
  dust += `<circle cx="${side.toFixed(0)}" cy="${(140 + rnd() * 360).toFixed(0)}" r="${(0.5 + rnd() * 0.6).toFixed(1)}"/>`;
}
document.getElementById("specks").innerHTML = dust;
```
